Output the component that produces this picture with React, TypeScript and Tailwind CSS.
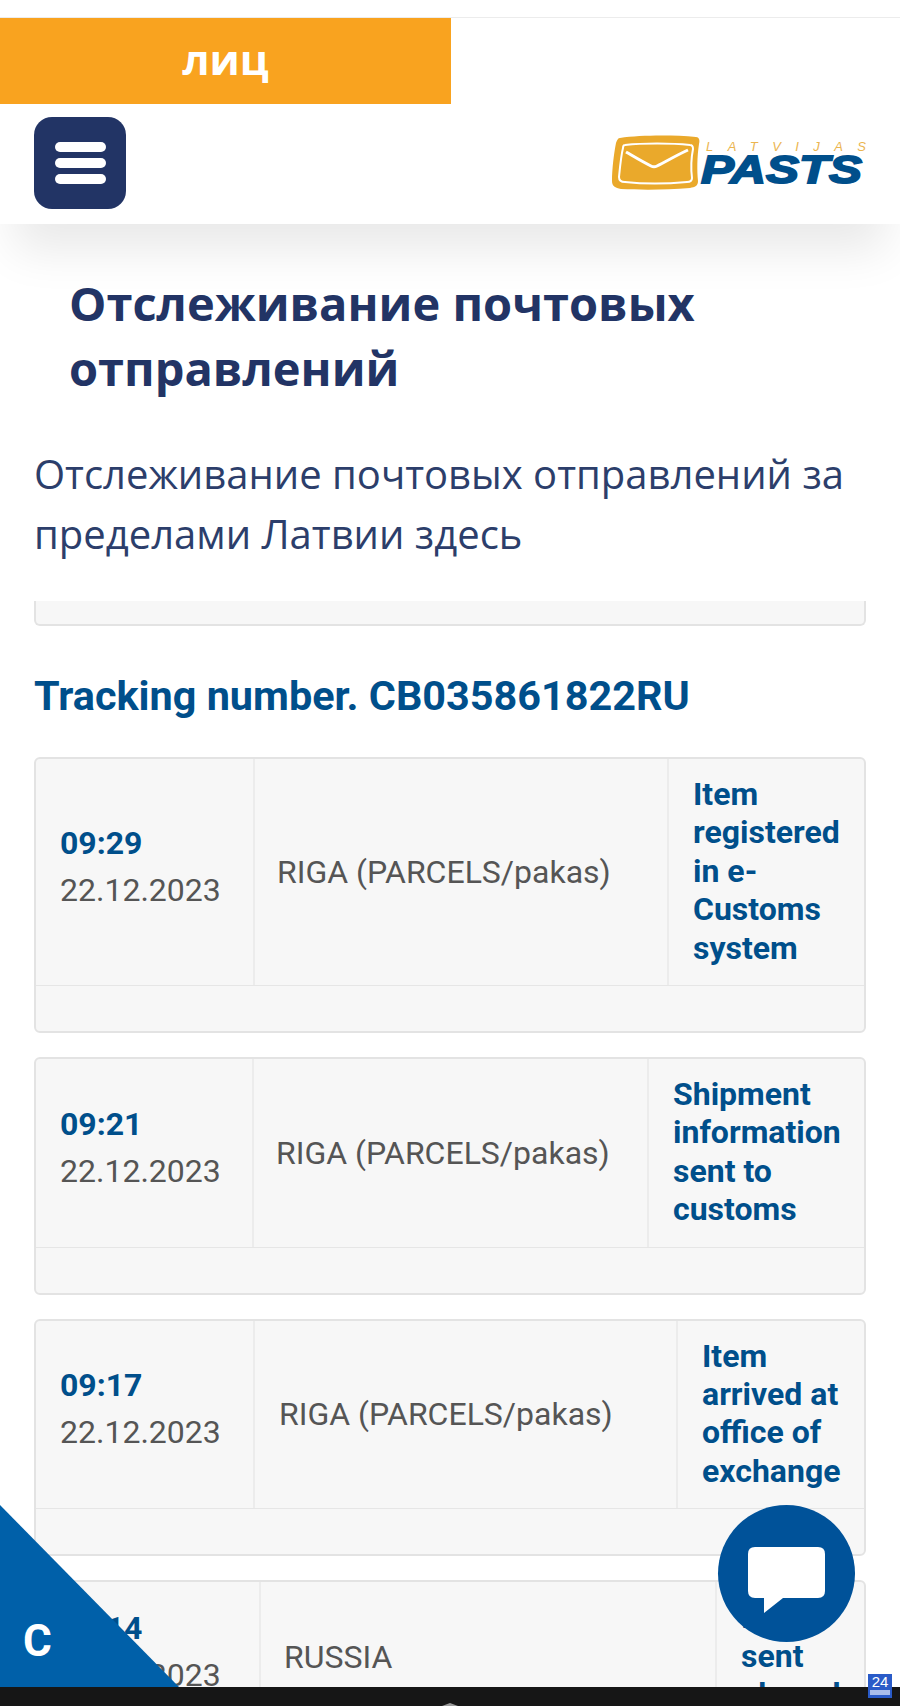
const EVENTS = [
  { time: '09:29', date: '22.12.2023', place: 'RIGA (PARCELS/pakas)', status: 'Item registered in e-Customs system', col1: 'w-[219px]', col3: 'w-[195px]', placeCls: 'pl-[22px]' },
  { time: '09:21', date: '22.12.2023', place: 'RIGA (PARCELS/pakas)', status: 'Shipment information sent to customs', col1: 'w-[218px]', col3: 'w-[215px]', placeCls: 'pl-[22px]' },
  { time: '09:17', date: '22.12.2023', place: 'RIGA (PARCELS/pakas)', status: 'Item arrived at office of exchange', col1: 'w-[219px]', col3: 'w-[186px]', placeCls: 'pl-[24px]' },
  { time: '08:14', date: '22.12.2023', place: 'RUSSIA', status: 'Item sent abroad', col1: 'w-[225px]', col3: 'w-[147px]', placeCls: 'pl-[23px]' },
]

function Logo() {
  return (
    <svg width="258" height="58" viewBox="0 0 258 58">
      <path d="M9 3 C30 0 62 0 85 2 C88 2 89 5 88 9 C86 22 86 36 87 46 C87 51 84 52 79 53 C55 55 30 55 10 54 C4 53 1 51 1 46 C1 34 3 18 5 8 C6 5 7 3 9 3 Z" fill="#eaa92b" />
      <path d="M14 10 C32 8 60 8 79 10 C81 10 82 12 82 14 C80 24 80 35 81 43 C81 46 79 47 76 47 C55 49 32 49 14 47 C10 47 8 45 8 42 C9 32 10 21 12 13 C12 11 13 10 14 10 Z" fill="none" stroke="#fff" strokeWidth="2" />
      <path d="M15 17 C22 21 30 26 40 31 C42 32 44 32 46 31 C56 26 66 20 77 15" fill="none" stroke="#fff" strokeWidth="3" />
      <text x="95" y="16" textLength="160" fill="#ebb54f" fontFamily="'Liberation Sans', sans-serif" fontStyle="italic" fontSize="13">LATVIJAS</text>
      <text x="90" y="48" textLength="161" lengthAdjust="spacingAndGlyphs" fill="#004f8b" stroke="#004f8b" strokeWidth="1.8" fontFamily="'Liberation Sans', sans-serif" fontStyle="italic" fontWeight="700" fontSize="39">PASTS</text>
    </svg>
  )
}

function EventCard({ ev }: { ev: (typeof EVENTS)[number] }) {
  return (
    <div className="overflow-hidden rounded-[6px] border-2 border-[#e3e3e3] bg-[#f7f7f7] font-['Roboto',sans-serif] text-[32px] leading-[38.4px]">
      <div className="flex border-b border-b-[#e6e6e6]">
        <div className={`${ev.col1} flex shrink-0 flex-col justify-center border-r-2 border-r-[#ececec] pb-[10px] pl-[24px]`}>
          <span className="font-bold leading-[47px] text-[#004f8b]">{ev.time}</span>
          <span className="leading-[47px] text-[#555555]">{ev.date}</span>
        </div>
        <div className={`${ev.placeCls} flex flex-1 items-center border-r-2 border-r-[#ececec] text-[#555555]`}>{ev.place}</div>
        <div className={`${ev.col3} shrink-0 pb-[18px] pl-[24px] pr-[20px] pt-[16px] font-bold text-[#004f8b]`}>{ev.status}</div>
      </div>
      <div className="h-[45px]" />
    </div>
  )
}

export default function App() {
  return (
    <div className="relative h-[1706px] w-[900px] overflow-hidden bg-white">
      <div className="h-[18px] border-b border-b-[#ececec]" />
      <header className="relative z-10 bg-white shadow-[0_40px_44px_-14px_rgba(0,0,0,0.09)]">
        <div className="flex h-[86px] w-[451px] items-center justify-center bg-[#f9a31f] pb-[6px] font-['Open_Sans',sans-serif] text-[42px] font-bold text-white">лиц</div>
        <div className="flex h-[120px] items-start justify-between pl-[34px] pr-[31px] pt-[13px]">
          <button className="flex h-[92px] w-[92px] flex-col items-center justify-center gap-[6px] rounded-[18px] bg-[#223465]">
            <span className="h-[10px] w-[51px] rounded-full bg-white" />
            <span className="h-[10px] w-[51px] rounded-full bg-white" />
            <span className="h-[10px] w-[51px] rounded-full bg-white" />
          </button>
          <div className="mt-[18px]"><Logo /></div>
        </div>
      </header>

      <main>
        <h1 className="pl-[69px] pr-[30px] pt-[47px] font-['Open_Sans',sans-serif] text-[47px] font-bold leading-[65px] text-[#223465]">Отслеживание почтовых отправлений</h1>
        <p className="mt-[43px] px-[34px] font-['Open_Sans',sans-serif] text-[40px] leading-[60px] text-[#2c3e6b]">Отслеживание почтовых отправлений за пределами Латвии здесь</p>

        <div className="mx-[34px] mt-[37px] h-[25px] rounded-b-[6px] border-x-2 border-b-2 border-[#e3e3e3] bg-[#f7f7f7]" />

        <h2 className="mx-[34px] mt-[44px] whitespace-nowrap font-['Roboto',sans-serif] text-[41.4px] font-bold leading-[52px] text-[#004f8b]">Tracking number. CB035861822RU</h2>

        <div className="mx-[34px] mt-[35px] flex flex-col gap-[24px]">
          {EVENTS.map((ev) => <EventCard key={ev.time} ev={ev} />)}
        </div>
      </main>

      <div className="absolute bottom-[19px] left-0 h-[182px] w-[179px] bg-[#0060a9] [clip-path:polygon(0_0,100%_100%,0_100%)]">
        <span className="absolute left-[23px] top-[110px] font-['Roboto',sans-serif] text-[44px] font-bold leading-[52px] text-white">С</span>
      </div>

      <div className="absolute left-[718px] top-[1505px] flex h-[137px] w-[137px] items-center justify-center rounded-full bg-[#005299]">
        <svg width="77" height="66" viewBox="0 0 77 66" className="mt-[13px]">
          <path d="M7 0 H70 Q77 0 77 7 V44 Q77 51 70 51 H35 L16 66 V51 H7 Q0 51 0 44 V7 Q0 0 7 0 Z" fill="#fff" />
        </svg>
      </div>

      <div className="absolute bottom-0 left-0 flex h-[19px] w-full justify-center bg-[#161616] pt-[16px]">
        <svg width="16" height="3" viewBox="0 0 16 3"><path d="M8 0 L16 3 H0 Z" fill="#9a9a9a" /></svg>
      </div>

      <div className="absolute left-[868px] top-[1674px] flex h-[24px] w-[24px] flex-col items-center bg-[#2a5bc8] font-['Liberation_Sans',sans-serif] text-[15px] leading-[15px] text-white">
        24
        <span className="mt-[1px] h-[5px] w-[20px] bg-[#a9bdea]" />
      </div>
    </div>
  )
}
